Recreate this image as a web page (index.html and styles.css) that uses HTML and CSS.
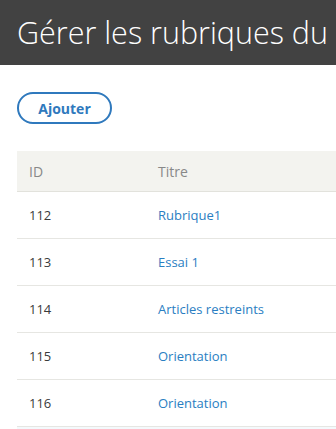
FILE: index.html
```html
<!DOCTYPE html>
<html lang="fr">

<head>
    <meta charset="UTF-8">
    <meta name="viewport" content="width=device-width, initial-scale=1.0">
    <title>Gérer les rubriques du site</title>
    <link rel="stylesheet" href="styles.css">
</head>

<body>
    <header class="page-header">
        <h1>Gérer les rubriques du</h1>
    </header>

    <main class="content">
        <button class="btn-add">Ajouter</button>

        <table class="sections">
            <thead>
                <tr>
                    <th class="col-id">ID</th>
                    <th>Titre</th>
                </tr>
            </thead>
            <tbody>
                <tr><td class="col-id">112</td><td><a href="#">Rubrique1</a></td></tr>
                <tr><td class="col-id">113</td><td><a href="#">Essai 1</a></td></tr>
                <tr><td class="col-id">114</td><td><a href="#">Articles restreints</a></td></tr>
                <tr><td class="col-id">115</td><td><a href="#">Orientation</a></td></tr>
                <tr><td class="col-id">116</td><td><a href="#">Orientation</a></td></tr>
            </tbody>
        </table>
        <div class="table-next"></div>
    </main>
</body>

</html>
```

FILE: styles.css
```css
body {
    margin: 0;
    font-family: "Open Sans", Arial, sans-serif;
    color: #3a3a3a;
    background: #fff;
    overflow: hidden;
}

.page-header {
    background-color: #424242;
    height: 65px;
    padding: 0 17px;
    overflow: hidden;
}

.page-header h1 {
    margin: 0;
    color: #fff;
    font-weight: 300;
    font-size: 30.5px;
    line-height: 65px;
    white-space: nowrap;
}

.content {
    padding: 27px 0 0 17px;
}

.btn-add {
    display: block;
    width: 95px;
    height: 32px;
    border: 2px solid #2f79bd;
    border-radius: 16px;
    background: #fff;
    color: #2f79bd;
    font-family: "Open Sans", Arial, sans-serif;
    font-weight: 700;
    font-size: 14px;
    cursor: pointer;
}

.sections {
    margin-top: 27px;
    width: 400px;
    border-collapse: collapse;
    font-size: 13px;
}

.sections th {
    background-color: #f3f3ef;
    color: #888;
    font-weight: 400;
    font-size: 14px;
    text-align: left;
    height: 40px;
    padding: 0 12px;
    border-bottom: 1px solid #e2e2dc;
}

.sections td {
    height: 46px;
    padding: 0 12px;
    border-bottom: 1px solid #e6e6e2;
}

.sections .col-id {
    width: 105px;
}

.sections a {
    color: #2a7ec2;
    text-decoration: none;
}

.table-next {
    width: 400px;
    height: 20px;
    background-color: #f4f9fc;
}
```
